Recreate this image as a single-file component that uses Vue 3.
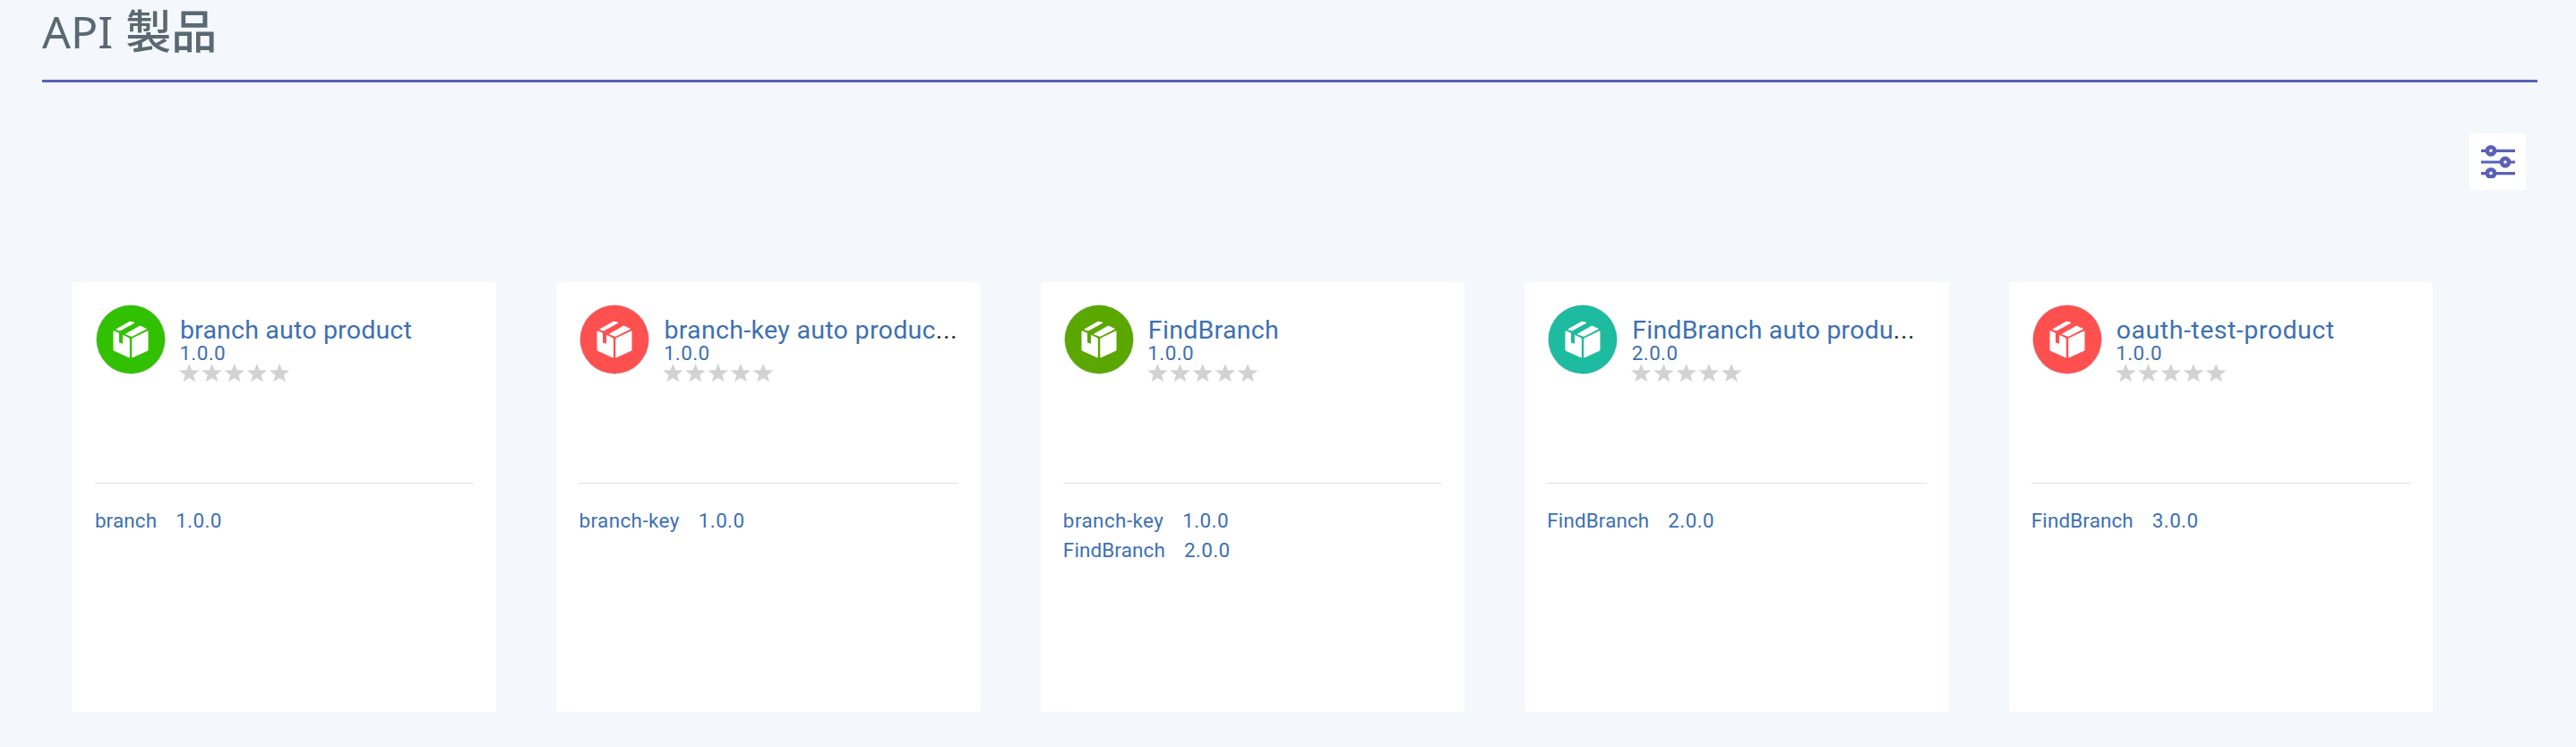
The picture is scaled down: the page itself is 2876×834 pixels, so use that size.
<script setup>
const products = [
  { name: 'branch auto product', tracking: 0.2, version: '1.0.0', color: '#32c100', apis: [['branch', '1.0.0']] },
  { name: 'branch-key auto produc', tracking: 0.32, cut: true, version: '1.0.0', color: '#ff5050', apis: [['branch-key', '1.0.0']] },
  { name: 'FindBranch', tracking: 0.3, version: '1.0.0', color: '#5aa700', apis: [['branch-key', '1.0.0'], ['FindBranch', '2.0.0']] },
  { name: 'FindBranch auto produ', tracking: 0.2, cut: true, version: '2.0.0', color: '#1dbb9f', apis: [['FindBranch', '2.0.0']] },
  { name: 'oauth-test-product', tracking: 0.52, version: '1.0.0', color: '#ff5050', apis: [['FindBranch', '3.0.0']] }
]
</script>

<template>
  <main class="page">
    <h1 class="title">API <span class="cjk">製品</span></h1>
    <div class="toolbar">
      <button class="filter" aria-label="filter">
        <svg width="63" height="63" viewBox="0 0 63 63">
          <path d="M13 19.3H51M13 32H51M13 44.6H51" stroke="#5a60b9" stroke-width="3.2" />
          <g fill="#fff" stroke="#5a60b9" stroke-width="4.6">
            <circle cx="24" cy="19.3" r="4.1" />
            <circle cx="40" cy="32" r="4.1" />
            <circle cx="24" cy="44.4" r="4.1" />
          </g>
          <path d="M18 50H30V53H18Z" fill="#fff" />
        </svg>
      </button>
    </div>
    <section class="cards">
      <article v-for="p in products" :key="p.name" class="card">
        <header class="head">
          <svg class="logo" width="78" height="78" viewBox="0 0 78 78">
            <circle cx="39" cy="39" r="38.8" fill="#cfd3da" />
            <circle cx="39" cy="39" r="38.2" :fill="p.color" />
            <g fill="#fff" stroke="#fff" stroke-width="1" stroke-linejoin="round">
              <path d="M22.8 27.8L38 19.2L43 20.3L27 29Z" />
              <path d="M33.5 33L49.3 24.1L56.3 27.2L40.2 35.4Z" />
              <path d="M20 29.7L25.5 32V42.8L30.5 44.5V34.5L37.3 37.8V59L20 51.1Z" />
              <path d="M40.8 38L58 29.8V51.1L40.8 59Z" />
            </g>
          </svg>
          <div class="info">
            <div class="name"><span :style="{ letterSpacing: p.tracking + 'px' }">{{ p.name }}</span><span v-if="p.cut" class="dots">...</span></div>
            <div class="version">{{ p.version }}</div>
            <svg class="stars" width="126" height="21" viewBox="0 0 126 21">
              <path v-for="n in 5" :key="n" :transform="`translate(${(n - 1) * 25.2} 0)`" fill="#d2d2d2" d="M11.3 0L14.2 7.3L22.6 7.6L15.9 12.7L18.2 20.3L11.3 16.1L4.4 20.3L6.7 12.7L0 7.6L8.4 7.3Z" />
            </svg>
          </div>
        </header>
        <ul class="apis">
          <li v-for="a in p.apis" :key="a[0]"><span :class="{ hyphenated: a[0].includes('-') }">{{ a[0] }}</span><span class="num">{{ a[1] }}</span></li>
        </ul>
      </article>
    </section>
  </main>
</template>

<style>
body { background: #f4f7fb; overflow: hidden; }
</style>

<style scoped>
.page {
  box-sizing: border-box;
  height: 834px;
  background: #f4f7fb;
  font-family: Roboto, "Noto Sans CJK JP", sans-serif;
  color: #3d70b2;
}
.title {
  box-sizing: border-box;
  height: 92px;
  margin: 0 43px 0 47px;
  border-bottom: 3px solid #5a60b9;
  font: 400 50px/64px "Noto Sans", "Noto Sans CJK JP", sans-serif;
  color: #5a6872;
  white-space: nowrap;
}
.cjk { margin-left: 1px; font-family: "Noto Sans CJK JP", sans-serif; font-size: 51px; font-weight: 500; }
.toolbar {
  display: flex;
  justify-content: flex-end;
  padding: 57px 56px 0 0;
}
.filter {
  width: 63px;
  height: 63px;
  padding: 0;
  border: 0;
  background: #fff;
}
.filter svg { display: block; }
.cards {
  display: grid;
  grid-template-columns: repeat(5, 473.3px);
  column-gap: 67.2px;
  margin: 103px 0 0 80.9px;
}
.card {
  box-sizing: border-box;
  height: 480px;
  padding: 25px;
  background: #fff;
}
.head {
  box-sizing: border-box;
  display: flex;
  height: 200px;
  border-bottom: 1px solid #dfe1e3;
}
.logo { flex: none; margin: 0.3px 0 0 1px; }
.info { margin: 14px 0 0 15px; white-space: nowrap; }
.name { padding-left: 1px; font-size: 28.5px; line-height: 30px; }
.dots { letter-spacing: 0.6px; color: #152935; }
.version { padding-left: 0.5px; font-size: 22.4px; line-height: 21px; letter-spacing: 0.4px; }
.stars { display: block; margin-top: 1px; }
.apis { margin: 25px 0 0; padding: 0; list-style: none; }
.apis li { display: flex; gap: 21px; font-size: 22.4px; line-height: 33px; letter-spacing: 0.15px; }
.apis .hyphenated { letter-spacing: 0.45px; }
.apis .num { letter-spacing: 0.4px; }
</style>
